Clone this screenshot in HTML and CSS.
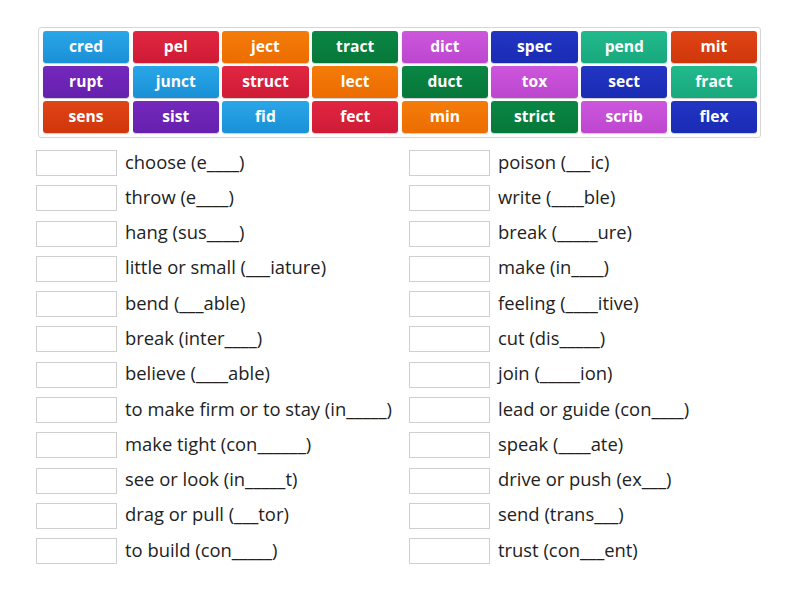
FILE: index.html
```html
<!DOCTYPE html>
<html lang="en">

<head>
  <meta charset="UTF-8">
  <meta name="viewport" content="width=device-width, initial-scale=1.0">
  <title>Word roots</title>

  <link rel="stylesheet" href="styles.css">
</head>

<body>
  <main class="activity">
    <div class="tiles">
      <div class="tile sky">cred</div>
      <div class="tile red">pel</div>
      <div class="tile orange">ject</div>
      <div class="tile green">tract</div>
      <div class="tile pink">dict</div>
      <div class="tile navy">spec</div>
      <div class="tile teal">pend</div>
      <div class="tile rust">mit</div>

      <div class="tile purple">rupt</div>
      <div class="tile sky">junct</div>
      <div class="tile red">struct</div>
      <div class="tile orange">lect</div>
      <div class="tile green">duct</div>
      <div class="tile pink">tox</div>
      <div class="tile navy">sect</div>
      <div class="tile teal">fract</div>

      <div class="tile rust">sens</div>
      <div class="tile purple">sist</div>
      <div class="tile sky">fid</div>
      <div class="tile red">fect</div>
      <div class="tile orange">min</div>
      <div class="tile green">strict</div>
      <div class="tile pink">scrib</div>
      <div class="tile navy">flex</div>
    </div>

    <div class="answers">
      <div class="column">
        <div class="row"><span class="slot"></span><span class="clue">choose (e____)</span></div>
        <div class="row"><span class="slot"></span><span class="clue">throw (e____)</span></div>
        <div class="row"><span class="slot"></span><span class="clue">hang (sus____)</span></div>
        <div class="row"><span class="slot"></span><span class="clue">little or small (___iature)</span></div>
        <div class="row"><span class="slot"></span><span class="clue">bend (___able)</span></div>
        <div class="row"><span class="slot"></span><span class="clue">break (inter____)</span></div>
        <div class="row"><span class="slot"></span><span class="clue">believe (____able)</span></div>
        <div class="row"><span class="slot"></span><span class="clue">to make firm or to stay (in_____)</span></div>
        <div class="row"><span class="slot"></span><span class="clue">make tight (con______)</span></div>
        <div class="row"><span class="slot"></span><span class="clue">see or look (in_____t)</span></div>
        <div class="row"><span class="slot"></span><span class="clue">drag or pull (___tor)</span></div>
        <div class="row"><span class="slot"></span><span class="clue">to build (con_____)</span></div>
      </div>
      <div class="column">
        <div class="row"><span class="slot"></span><span class="clue">poison (___ic)</span></div>
        <div class="row"><span class="slot"></span><span class="clue">write (____ble)</span></div>
        <div class="row"><span class="slot"></span><span class="clue">break (_____ure)</span></div>
        <div class="row"><span class="slot"></span><span class="clue">make (in____)</span></div>
        <div class="row"><span class="slot"></span><span class="clue">feeling (____itive)</span></div>
        <div class="row"><span class="slot"></span><span class="clue">cut (dis_____)</span></div>
        <div class="row"><span class="slot"></span><span class="clue">join (_____ion)</span></div>
        <div class="row"><span class="slot"></span><span class="clue">lead or guide (con____)</span></div>
        <div class="row"><span class="slot"></span><span class="clue">speak (____ate)</span></div>
        <div class="row"><span class="slot"></span><span class="clue">drive or push (ex___)</span></div>
        <div class="row"><span class="slot"></span><span class="clue">send (trans___)</span></div>
        <div class="row"><span class="slot"></span><span class="clue">trust (con___ent)</span></div>
      </div>
    </div>
  </main>
</body>

</html>
```

FILE: styles.css
```css
body {
  margin: 0;
  background-color: #fff;
  font-family: "Open Sans", "Liberation Sans", sans-serif;
  color: #222;
}

.activity {
  padding: 27px 0 0 36px;
}

.tiles {
  display: grid;
  grid-template-columns: repeat(8, 1fr);
  gap: 3.5px 3.6px;

  width: 723px;
  margin-left: 2px;
  padding: 3px 3px 4px 4px;
  box-sizing: border-box;

  border: 1px solid #d6d6d6;
  border-radius: 3px;
}

.tile {
  height: 31.5px;
  display: flex;
  align-items: center;
  justify-content: center;
  padding-bottom: 2px;
  box-sizing: border-box;

  border-radius: 3px;
  box-shadow: 0 1px 1px rgba(0, 0, 0, 0.2);

  color: #fff;
  font-size: 15.6px;
  font-weight: 700;
}

.sky { background: linear-gradient(180deg, #2aa6e8, #1a90d6); }
.red { background: linear-gradient(180deg, #e12641, #cf1b36); }
.orange { background: linear-gradient(180deg, #f47c0a, #ec6c00); }
.green { background: linear-gradient(180deg, #0a8744, #06773a); }
.pink { background: linear-gradient(180deg, #cc56dc, #bd46cf); }
.navy { background: linear-gradient(180deg, #2236c4, #1a2bb3); }
.teal { background: linear-gradient(180deg, #22ba8c, #18a87d); }
.rust { background: linear-gradient(180deg, #df4516, #cf360a); }
.purple { background: linear-gradient(180deg, #7428bc, #6520ad); }

.answers {
  display: flex;
  margin-top: 12.5px;
}

.column {
  width: 373px;
  display: flex;
  flex-direction: column;
  gap: 9.3px;
}

.row {
  display: flex;
  align-items: center;
  height: 26px;
}

.slot {
  width: 81px;
  height: 26px;
  box-sizing: border-box;
  border: 1px solid #cfcfcf;
  background: #fff;
  flex-shrink: 0;
}

.clue {
  margin-left: 8px;
  margin-bottom: 4px;
  font-size: 18.4px;
  white-space: nowrap;
}
```
